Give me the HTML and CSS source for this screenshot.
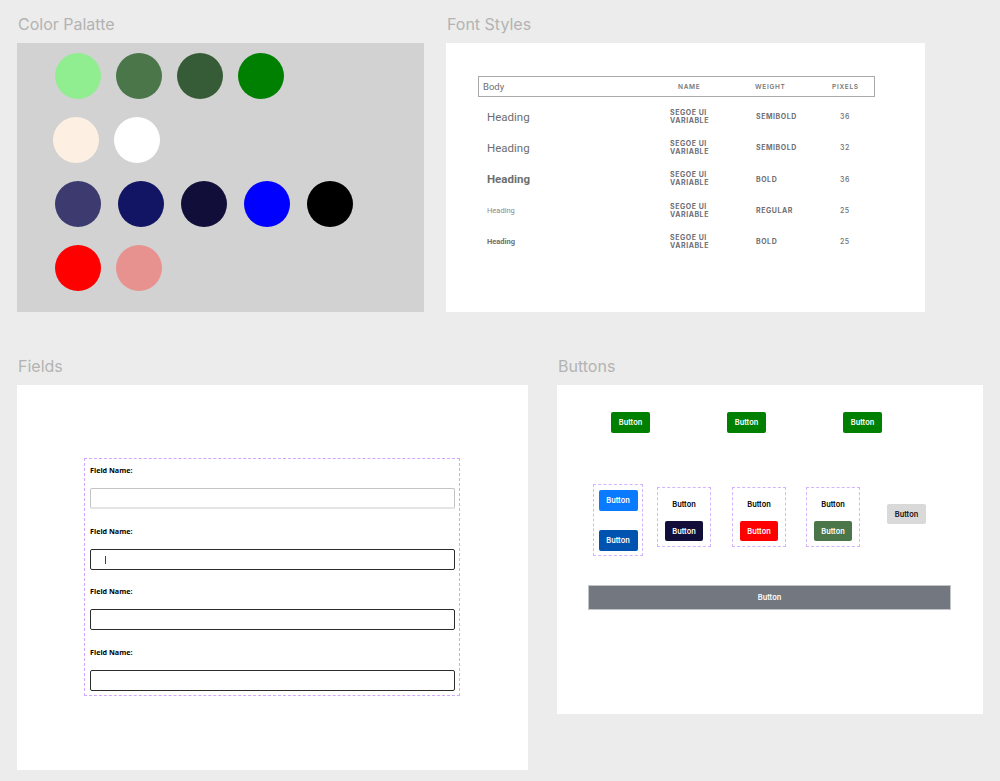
FILE: index.html
```html
<!DOCTYPE html>
<html lang="en">
<head>
<meta charset="utf-8">
<title>Design System</title>
<link rel="stylesheet" href="styles.css">
</head>
<body>
<div class="canvas">

  <section class="board board-palette">
    <h2 class="board-title">Color Palatte</h2>
    <div class="frame palette">
      <div class="swatch-row">
        <span class="swatch" style="background:#90ee90"></span>
        <span class="swatch" style="background:#4a764a"></span>
        <span class="swatch" style="background:#365c37"></span>
        <span class="swatch" style="background:#008000"></span>
      </div>
      <div class="swatch-row row-shift">
        <span class="swatch" style="background:#fdefe2"></span>
        <span class="swatch" style="background:#ffffff"></span>
      </div>
      <div class="swatch-row row-wide">
        <span class="swatch" style="background:#3c3a6e"></span>
        <span class="swatch" style="background:#111563"></span>
        <span class="swatch" style="background:#110f3a"></span>
        <span class="swatch" style="background:#0000ff"></span>
        <span class="swatch" style="background:#000000"></span>
      </div>
      <div class="swatch-row">
        <span class="swatch" style="background:#ff0000"></span>
        <span class="swatch" style="background:#e89290"></span>
      </div>
    </div>
  </section>

  <section class="board board-fonts">
    <h2 class="board-title">Font Styles</h2>
    <div class="frame fonts">
      <div class="type-table">
        <div class="type-head">
          <span class="th-body">Body</span>
          <span class="th">NAME</span>
          <span class="th">WEIGHT</span>
          <span class="th">PIXELS</span>
        </div>
        <div class="type-row">
          <span class="sample s-semi36">Heading</span>
          <span class="cell-name">SEGOE UI<br>VARIABLE</span>
          <span class="cell">SEMIBOLD</span>
          <span class="cell-px">36</span>
        </div>
        <div class="type-row">
          <span class="sample s-semi32">Heading</span>
          <span class="cell-name">SEGOE UI<br>VARIABLE</span>
          <span class="cell">SEMIBOLD</span>
          <span class="cell-px">32</span>
        </div>
        <div class="type-row">
          <span class="sample s-bold36">Heading</span>
          <span class="cell-name">SEGOE UI<br>VARIABLE</span>
          <span class="cell">BOLD</span>
          <span class="cell-px">36</span>
        </div>
        <div class="type-row">
          <span class="sample s-reg25">Heading</span>
          <span class="cell-name">SEGOE UI<br>VARIABLE</span>
          <span class="cell">REGULAR</span>
          <span class="cell-px">25</span>
        </div>
        <div class="type-row">
          <span class="sample s-bold25">Heading</span>
          <span class="cell-name">SEGOE UI<br>VARIABLE</span>
          <span class="cell">BOLD</span>
          <span class="cell-px">25</span>
        </div>
      </div>
    </div>
  </section>

  <section class="board board-fields">
    <h2 class="board-title">Fields</h2>
    <div class="frame fields">
      <div class="field-group">
        <div class="field">
          <label class="field-label">Field Name:</label>
          <div class="input input-rest"></div>
        </div>
        <div class="field">
          <label class="field-label">Field Name:</label>
          <div class="input input-active"><span class="caret"></span></div>
        </div>
        <div class="field">
          <label class="field-label">Field Name:</label>
          <div class="input input-active"></div>
        </div>
        <div class="field">
          <label class="field-label">Field Name:</label>
          <div class="input input-active"></div>
        </div>
      </div>
    </div>
  </section>

  <section class="board board-buttons">
    <h2 class="board-title">Buttons</h2>
    <div class="frame buttons">
      <div class="btn-row-top">
        <span class="btn btn-green">Button</span>
        <span class="btn btn-green">Button</span>
        <span class="btn btn-green">Button</span>
      </div>
      <div class="btn-row-mid">
        <div class="variant variant-blue">
          <span class="btn btn-blue">Button</span>
          <span class="btn btn-blue-dark">Button</span>
        </div>
        <div class="variant variant-pair v2">
          <span class="btn-text">Button</span>
          <span class="btn btn-navy">Button</span>
        </div>
        <div class="variant variant-pair v3">
          <span class="btn-text">Button</span>
          <span class="btn btn-red">Button</span>
        </div>
        <div class="variant variant-pair v4">
          <span class="btn-text">Button</span>
          <span class="btn btn-sage">Button</span>
        </div>
        <span class="btn btn-gray">Button</span>
      </div>
      <div class="btn-wide">Button</div>
    </div>
  </section>

</div>
</body>
</html>
```

FILE: styles.css
```css
* { box-sizing: border-box; }

html, body {
  margin: 0;
  padding: 0;
  background: #ececec;
}

body {
  font-family: Inter, "Noto Sans", sans-serif;
}

.canvas {
  position: relative;
  width: 1000px;
  height: 781px;
  overflow: hidden;
  background: #ececec;
}

/* boards on the free canvas */
.board { position: absolute; }
.board-palette { left: 17px; top: 13px; }
.board-fonts   { left: 446px; top: 13px; }
.board-fields  { left: 17px; top: 355px; }
.board-buttons { left: 557px; top: 355px; }

.board-title {
  margin: 0 0 0 1px;
  height: 30px;
  font-size: 16px;
  line-height: 22px;
  font-weight: 400;
  color: #b3b3b3;
}

.frame { background: #fff; }

/* ---------- palette ---------- */
.palette {
  width: 407px;
  height: 269px;
  background: #d2d2d2;
  padding: 10px 0 0 38px;
  display: flex;
  flex-direction: column;
  gap: 18px;
}
.swatch-row { display: flex; gap: 15px; }
.row-shift { margin-left: -2px; }
.row-wide { gap: 17px; }
.swatch {
  width: 46px;
  height: 46px;
  border-radius: 50%;
  display: block;
}

/* ---------- font styles ---------- */
.fonts {
  width: 479px;
  height: 269px;
  padding: 33px 0 0 32px;
}
.type-table { width: 397px; }
.type-head {
  height: 21px;
  border: 1px solid #a9a9a9;
  display: grid;
  grid-template-columns: 199px 77px 77px auto;
  align-items: center;
  color: #6f6f6f;
}
.th-body {
  padding-left: 4px;
  font-family: Roboto, sans-serif;
  font-size: 9.5px;
}
.th {
  font-family: Inter, sans-serif;
  font-size: 6.5px;
  font-weight: 600;
  letter-spacing: 0.7px;
  color: #777;
}
.type-row {
  height: 31.3px;
  display: grid;
  grid-template-columns: 192px 86px 84px auto;
  align-items: center;
  color: #777;
}
.type-head + .type-row { margin-top: 4px; }
.sample {
  padding-left: 9px;
  font-family: Roboto, sans-serif;
  color: #6e6e6e;
}
.s-semi36 { font-size: 11.5px; font-weight: 400; }
.s-semi32 { font-size: 11.5px; font-weight: 400; }
.s-bold36 { font-size: 11.5px; font-weight: 700; }
.s-reg25 { font-size: 7.5px; font-weight: 400; color: #8a8a8a; }
.s-bold25 { font-size: 7.5px; font-weight: 700; }
.cell-name, .cell, .cell-px {
  font-family: Inter, sans-serif;
  font-size: 7px;
  letter-spacing: 0.55px;
  color: #6f6f76;
}
.cell-name { font-weight: 700; line-height: 8px; }
.cell { font-weight: 700; }
.cell-px { font-weight: 500; }

/* ---------- fields ---------- */
.fields {
  width: 511px;
  height: 385px;
  padding: 73px 0 0 67px;
}
.field-group {
  width: 376px;
  height: 238px;
  border: 1px dashed #cfa8ff;
  padding: 6px 4px 0 5px;
  display: flex;
  flex-direction: column;
  gap: 16.7px;
}
.field { display: flex; flex-direction: column; gap: 13px; }
.field-label {
  display: block;
  height: 10px;
  line-height: 10px;
  font-family: "Open Sans", "Noto Sans", sans-serif;
  font-size: 7.2px;
  font-weight: 700;
  color: #000;
}
.input {
  position: relative;
  height: 21px;
  width: 365px;
  border-radius: 2px;
  background: #fff;
}
.input-rest {
  border: 1px solid #c4c4c4;
  border-bottom: 2px solid #e4e4e4;
}
.input-active {
  border: 1px solid #2c2c2c;
  border-bottom-width: 1.5px;
}
.caret {
  position: absolute;
  left: 14px;
  top: 6px;
  width: 1px;
  height: 8px;
  background: #444;
}

/* ---------- buttons ---------- */
.buttons {
  width: 426px;
  height: 329px;
  padding-top: 27px;
  display: flex;
  flex-direction: column;
}
.btn {
  display: inline-flex;
  align-items: center;
  justify-content: center;
  width: 39px;
  height: 21px;
  border-radius: 2px;
  font-family: Inter, sans-serif;
  font-size: 7.4px;
  font-weight: 600;
  color: #fff;
}
.btn-row-top {
  display: flex;
  gap: 77px;
  padding-left: 54px;
}
.btn-green { background: #008000; }

.btn-row-mid {
  display: flex;
  align-items: flex-start;
  margin-top: 51px;
  padding-left: 36px;
}
.variant {
  border: 1px dashed #d2b4ff;
  display: flex;
  flex-direction: column;
  align-items: center;
}
.variant-blue {
  width: 50px;
  height: 72px;
  padding-top: 5px;
  gap: 19px;
}
.btn-blue { background: #0a7bff; }
.btn-blue-dark { background: #0054b0; }
.variant-pair {
  width: 54px;
  height: 60px;
  margin-top: 3px;
  padding-top: 12px;
  gap: 11px;
}
.v2 { margin-left: 14px; }
.v3 { margin-left: 21px; }
.v4 { margin-left: 20px; }
.btn-text {
  height: 10px;
  line-height: 10px;
  font-family: Inter, sans-serif;
  font-size: 7.4px;
  font-weight: 600;
  color: #000;
}
.variant-pair .btn { width: 38px; height: 20px; }
.btn-navy { background: #110f3a; }
.btn-red { background: #ff0000; }
.btn-sage { background: #4a764a; }
.btn-gray {
  margin-left: 27px;
  margin-top: 20px;
  height: 20px;
  background: #d9d9d9;
  color: #111;
}

.btn-wide {
  margin: 29px 0 0 31px;
  width: 363px;
  height: 25px;
  background: #737880;
  border: 1px solid #c2c4c8;
  display: flex;
  align-items: center;
  justify-content: center;
  font-family: Inter, sans-serif;
  font-size: 7.4px;
  font-weight: 600;
  color: #fff;
}
```
